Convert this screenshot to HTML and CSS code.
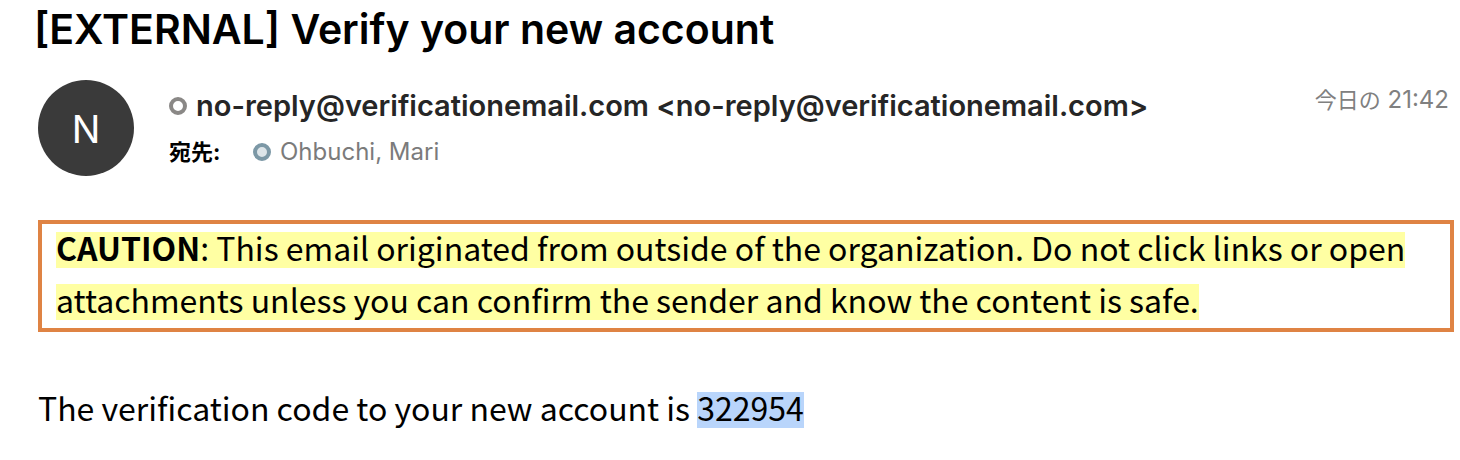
FILE: index.html
```html
<!DOCTYPE html>
<html lang="ja">
<head>
<meta charset="utf-8">
<title>[EXTERNAL] Verify your new account</title>
<link rel="stylesheet" href="styles.css">
</head>
<body>
<article class="mail">
  <h1 class="subject">[EXTERNAL] Verify your new account</h1>
  <header class="head">
    <div class="avatar">N</div>
    <div class="people">
      <div class="sender"><span class="dot"></span><span>no-reply@verificationemail.com &lt;no-reply@verificationemail.com&gt;</span></div>
      <div class="to"><span class="label">宛先:</span><span class="dot dot-blue"></span><span>Ohbuchi, Mari</span></div>
    </div>
    <time class="time"><span class="day">今日の</span> 21:42</time>
  </header>
  <div class="caution"><strong class="text warn">CAUTION</strong><mark class="text warn">: This email originated from outside of the organization. Do not click links or open attachments unless you can confirm the sender and know the content is safe.</mark></div>
  <p class="message"><span class="text">The verification code to your new account is </span><span class="text code">322954</span></p>
</article>
</body>
</html>
```
FILE: styles.css
```css
* { box-sizing: border-box; }
body { margin: 0; background: #fff; color: #000; font-family: Inter, "Noto Sans CJK JP", sans-serif; }
.mail { padding: 3px 6px 0 38px; }
.subject { margin: 0 0 0 -4px; font-size: 41px; line-height: 52px; font-weight: 600; }
.head { display: flex; margin-top: 25px; }
.avatar { width: 96px; height: 96px; flex: none; border-radius: 50%; background: #3a3a3a; color: #fff; font-size: 38px; line-height: 98px; text-align: center; }
.people { flex: 1; margin-left: 35px; padding-top: 8px; }
.sender { display: flex; align-items: center; gap: 9px; font-size: 29px; line-height: 36px; font-weight: 600; color: #262626; }
.to { display: flex; align-items: center; margin-top: 12px; font-size: 24px; line-height: 32px; color: #7b7b7b; }
.label { width: 84px; font-size: 22px; font-weight: 700; color: #000; }
.dot { width: 18px; height: 18px; flex: none; border: 4px solid #8a8886; border-radius: 50%; }
.dot-blue { margin-right: 9px; border-color: #7c98a6; background: #dde5e9; }
.time { margin-right: 5px; padding-top: 4px; font-size: 24px; line-height: 32px; color: #808080; white-space: nowrap; }
.day { font-size: 22px; }
.caution { margin-top: 44px; padding: 0 14px; border: 4px solid #df8344; }
.caution, .message { font-family: "Liberation Sans", Arial, sans-serif; font-size: 32px; line-height: 52px; }
.text { font-family: "Noto Sans CJK JP", sans-serif; line-height: 36px; color: #000; }
/* Highlight bands are shorter than the font's own line box. */
.warn { background: linear-gradient(transparent 8px, #ffffa3 8px, #ffffa3 44px, transparent 44px); }
.message { margin: 52px 0 0; }
.code { background: linear-gradient(transparent 8px, #b9d5fb 8px, #b9d5fb 44px, transparent 44px); }
```
